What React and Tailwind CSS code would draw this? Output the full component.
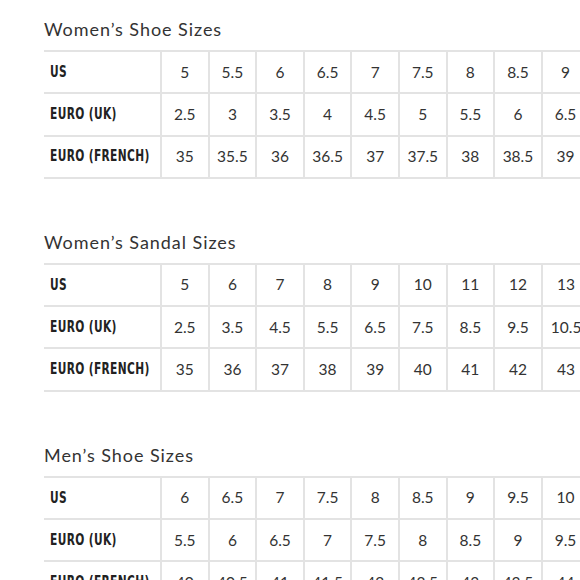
import React from "react";

const TABLES = [
  {
    title: "Women’s Shoe Sizes",
    rows: [
      ["US", ["5", "5.5", "6", "6.5", "7", "7.5", "8", "8.5", "9", "9.5", "10"]],
      ["EURO (UK)", ["2.5", "3", "3.5", "4", "4.5", "5", "5.5", "6", "6.5", "7", "7.5"]],
      ["EURO (FRENCH)", ["35", "35.5", "36", "36.5", "37", "37.5", "38", "38.5", "39", "39.5", "40"]],
    ],
  },
  {
    title: "Women’s Sandal Sizes",
    rows: [
      ["US", ["5", "6", "7", "8", "9", "10", "11", "12", "13"]],
      ["EURO (UK)", ["2.5", "3.5", "4.5", "5.5", "6.5", "7.5", "8.5", "9.5", "10.5"]],
      ["EURO (FRENCH)", ["35", "36", "37", "38", "39", "40", "41", "42", "43"]],
    ],
  },
  {
    title: "Men’s Shoe Sizes",
    rows: [
      ["US", ["6", "6.5", "7", "7.5", "8", "8.5", "9", "9.5", "10", "10.5", "11"]],
      ["EURO (UK)", ["5.5", "6", "6.5", "7", "7.5", "8", "8.5", "9", "9.5", "10", "10.5"]],
      ["EURO (FRENCH)", ["40", "40.5", "41", "41.5", "42", "42.5", "43", "43.5", "44", "44.5", "45"]],
    ],
  },
];

function SizeTable({ title, rows }) {
  const cols = rows[0][1].length;
  return (
    <section>
      <h2 className="h-6 mb-[9px] text-[18px] leading-6 text-[#333] font-['Lato','Open_Sans',sans-serif] tracking-[0.95px]">
        {title}
      </h2>
      <table className="table-fixed border-collapse" style={{ width: 117 + cols * 47.6 }}>
        <colgroup>
          <col className="w-[117px]" />
          {rows[0][1].map((_, i) => (
            <col key={i} className="w-[47.6px]" />
          ))}
        </colgroup>
        <tbody>
          {rows.map(([label, vals]) => (
            <tr key={label} className="h-[42.3px] border-y-2 border-[#e3e3e3]">
              <td className="pl-[6px] whitespace-nowrap">
                <span className="inline-block -translate-y-[1px] origin-left scale-x-[0.71] text-[15px] font-bold tracking-[0.5px] text-[#222] font-['DejaVu_Sans',sans-serif]">
                  {label}
                </span>
              </td>
              {vals.map((v, i) => (
                <td key={i} className="border-l-2 border-[#e3e3e3] text-center whitespace-nowrap text-[15.5px] text-[#333] font-['Lato','Open_Sans',sans-serif]">
                  {v}
                </td>
              ))}
            </tr>
          ))}
        </tbody>
      </table>
    </section>
  );
}

export default function App() {
  return (
    <div className="w-[580px] h-[580px] overflow-hidden bg-white pt-[17px] pl-[44px]">
      <div className="flex flex-col gap-[51px] w-max">
        {TABLES.map((t) => (
          <SizeTable key={t.title} {...t} />
        ))}
      </div>
    </div>
  );
}
